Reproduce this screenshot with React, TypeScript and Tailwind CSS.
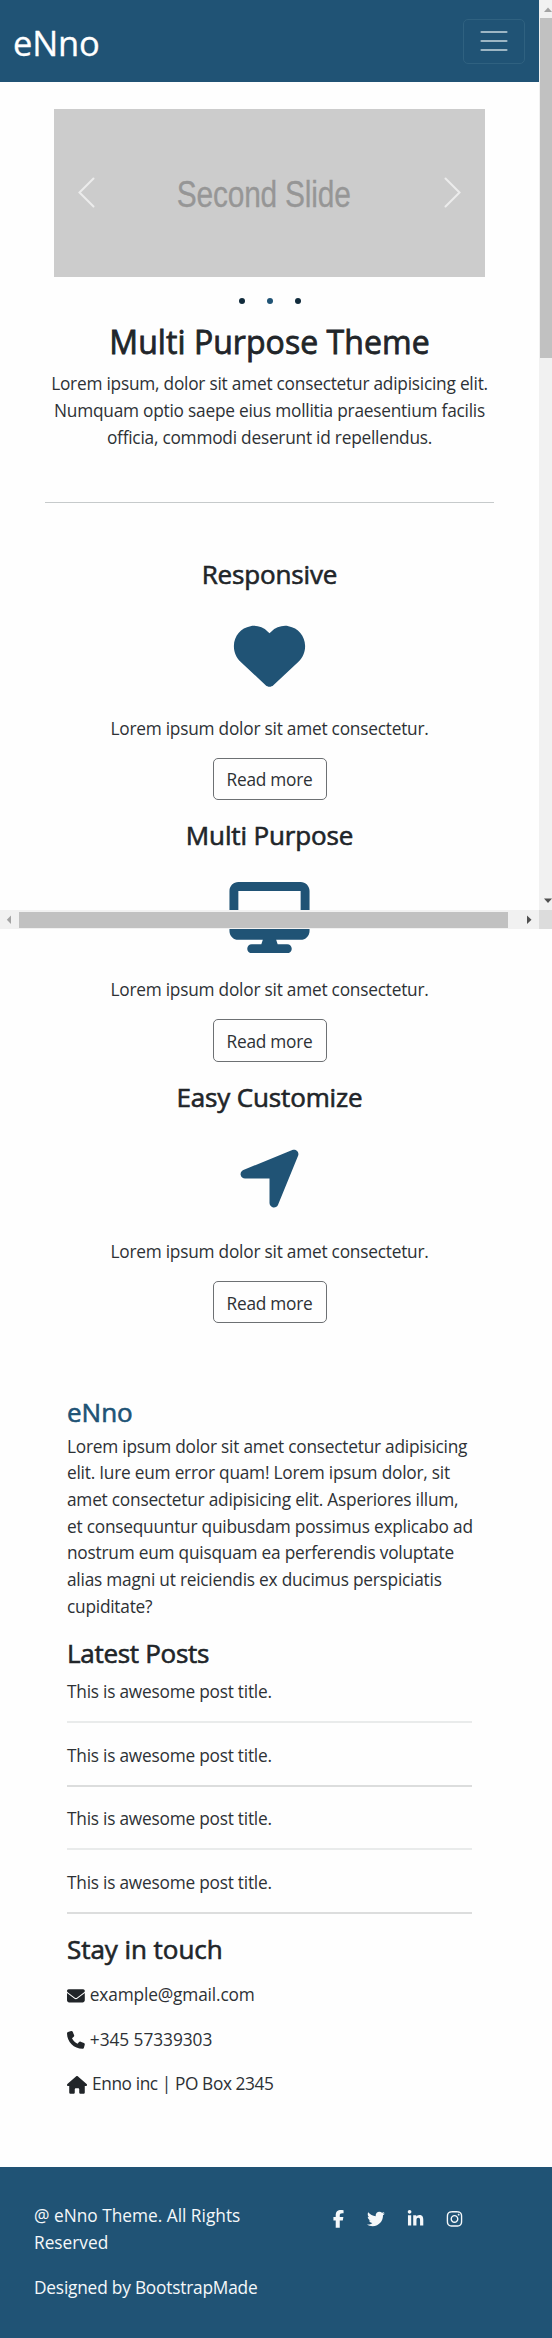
import type { ReactNode } from "react";
import type { IconType } from "react-icons";
import {
  FaDesktop,
  FaEnvelope,
  FaFacebookF,
  FaHeart,
  FaHouse,
  FaInstagram,
  FaLinkedinIn,
  FaLocationArrow,
  FaPhone,
  FaTwitter,
} from "react-icons/fa6";

const features: { title: string; icon: IconType }[] = [
  { title: "Responsive", icon: FaHeart },
  { title: "Multi Purpose", icon: FaDesktop },
  { title: "Easy Customize", icon: FaLocationArrow },
];

const posts = [
  { title: "This is awesome post title.", line: "bg-[#e9ebeb]" },
  { title: "This is awesome post title.", line: "bg-[#dcdddd]" },
  { title: "This is awesome post title.", line: "bg-[#e9ebeb]" },
  { title: "This is awesome post title.", line: "bg-[#dcdddd]" },
];

function SectionTitle({ children, className = "text-[#212529]" }: { children: ReactNode; className?: string }) {
  return (
    <h2
      className={`h-8 whitespace-nowrap text-[26px] leading-8 [-webkit-text-stroke:0.6px] ${className}`}
    >
      {children}
    </h2>
  );
}

function Header() {
  return (
    <header className="flex h-[82.3px] w-[539px] items-center justify-between bg-[#205375] pr-[14px] pl-[13px]">
      <span className="pt-[3px] text-[34.5px] leading-[48px] tracking-[-0.2px] text-white [-webkit-text-stroke:0.3px]">
        eNno
      </span>
      <button
        aria-label="Menu"
        className="flex h-[45px] w-[62px] items-center justify-center rounded-[5px] border border-[#2f6180]"
      >
        <svg width="28" height="24" viewBox="0 0 28 24" stroke="#9db6c4" strokeWidth="2.2" strokeLinecap="round">
          <path d="M1.5 3H26.5M1.5 12H26.5M1.5 21H26.5" />
        </svg>
      </button>
    </header>
  );
}

function Carousel() {
  return (
    <section className="flex flex-col items-center pt-[26.7px]">
      <div className="flex h-[168px] w-[431px] items-center justify-between bg-[#ccc] px-[24px]">
        <svg width="17" height="31" viewBox="0 0 17 31" fill="none" stroke="#ececec" strokeWidth="2" strokeLinecap="round">
          <path d="M15.5 1.5 1.5 15.5 15.5 29.5" />
        </svg>
        <div className="flex w-[174px] -translate-x-[6px] justify-center pt-[4px]">
          <span className="origin-center scale-x-[0.83] whitespace-nowrap font-['Liberation_Sans',sans-serif] text-[36px] leading-[40px] text-[#969696] [-webkit-text-stroke:0.3px]">
            Second Slide
          </span>
        </div>
        <svg width="17" height="31" viewBox="0 0 17 31" fill="none" stroke="#ececec" strokeWidth="2" strokeLinecap="round">
          <path d="M1.5 1.5 15.5 15.5 1.5 29.5" />
        </svg>
      </div>
      <div className="mt-[21px] flex h-[6px] gap-[22px]">
        <i className="size-[6px] rounded-full bg-[#112b3c]" />
        <i className="size-[6px] rounded-full bg-[#205375]" />
        <i className="size-[6px] rounded-full bg-[#112b3c]" />
      </div>
      <h1 className="mt-[19px] h-[38px] whitespace-nowrap text-[32px] leading-[38px] tracking-[0.05px] text-[#212529] [-webkit-text-stroke:0.8px]">
        Multi Purpose Theme
      </h1>
      <p className="mt-[10.2px] text-center whitespace-nowrap">
        Lorem ipsum, dolor sit amet consectetur adipisicing elit.
        <br />
        Numquam optio saepe eius mollitia praesentium facilis
        <br />
        officia, commodi deserunt id repellendus.
      </p>
    </section>
  );
}

function Features() {
  return (
    <section>
      {features.map(({ title, icon: Icon }) => (
        <article key={title} className="flex h-[261.6px] flex-col items-center">
          <SectionTitle className="tracking-[-0.15px] text-[#212529]">{title}</SectionTitle>
          <div className="flex h-[126px] items-center pt-[6.3px]">
            <Icon className="h-[71.2px] w-[81px] text-[#205375]" />
          </div>
          <p className="whitespace-nowrap">Lorem ipsum dolor sit amet consectetur.</p>
          <button className="mt-[15.3px] h-[42.5px] w-[114px] rounded-[5px] border border-[#6d7073] pt-[4px] tracking-[-0.25px]">
            Read more
          </button>
        </article>
      ))}
    </section>
  );
}

function About() {
  return (
    <section className="pl-[67px]">
      <SectionTitle className="tracking-[0px] text-[#205375]">eNno</SectionTitle>
      <p className="mt-[5.7px] whitespace-nowrap">
        Lorem ipsum dolor sit amet consectetur adipisicing
        <br />
        elit. Iure eum error quam! Lorem ipsum dolor, sit
        <br />
        amet consectetur adipisicing elit. Asperiores illum,
        <br />
        et consequuntur quibusdam possimus explicabo ad
        <br />
        nostrum eum quisquam ea perferendis voluptate
        <br />
        alias magni ut reiciendis ex ducimus perspiciatis
        <br />
        cupiditate?
      </p>
      <SectionTitle className="mt-[17px] mb-[10px] tracking-[-0.3px] text-[#212529]">Latest Posts</SectionTitle>
      {posts.map((post, i) => (
        <div key={i} className="h-[63.4px] w-[405px]">
          <p>{post.title}</p>
          <div className={`mt-[15.3px] h-[2px] ${post.line}`} />
        </div>
      ))}
      <SectionTitle className="tracking-[-0.05px] text-[#212529]">Stay in touch</SectionTitle>
      <ul className="mt-[17.3px] flex flex-col gap-[17.8px]">
        <li className="flex items-center gap-[5px] tracking-[-0.15px]">
          <FaEnvelope className="size-[17.8px] text-[#212529]" />
          example@gmail.com
        </li>
        <li className="flex items-center gap-[5px] tracking-[-0.05px]">
          <FaPhone className="size-[17.8px] text-[#212529]" />
          +345 57339303
        </li>
        <li className="flex items-center gap-[5px] tracking-[-0.4px]">
          <FaHouse className="h-[17.8px] w-[20px] text-[#212529]" />
          Enno inc | PO Box 2345
        </li>
      </ul>
    </section>
  );
}

function Footer() {
  return (
    <footer className="flex h-[170.7px] bg-[#205375] pt-[35px] pl-[34px] text-[#f5f8fa]">
      <div className="w-[298px] pt-px whitespace-nowrap">
        <p className="tracking-[0px]">
          @ eNno Theme. All Rights
          <br />
          Reserved
        </p>
        <p className="mt-[17.8px] tracking-[-0.2px]">Designed by BootstrapMade</p>
      </div>
      <div className="flex h-[34px] items-center gap-[22px]">
        <FaFacebookF className="h-[17.8px] w-[13px]" />
        <FaTwitter className="size-[17.8px]" />
        <FaLinkedinIn className="h-[17.8px] w-[17px]" />
        <FaInstagram className="h-[17.8px] w-[17px]" />
      </div>
    </footer>
  );
}

function Scrollbars() {
  return (
    <>
      <div className="absolute top-0 right-0 flex h-[910px] w-[13px] flex-col items-end bg-[#f1f1f1]">
        <svg className="h-[18px] w-[13px]" viewBox="0 0 13 18">
          <path d="M5 12 9 7.5 13 12Z" fill="#a3a3a3" />
        </svg>
        <div className="h-[340px] w-[12px] bg-[#c1c1c1]" />
        <svg className="mt-auto h-[18px] w-[13px]" viewBox="0 0 13 18">
          <path d="M5 6.5 9 11 13 6.5Z" fill="#505050" />
        </svg>
      </div>
      <div className="absolute top-[910px] left-0 flex h-[19px] w-[552px] items-center bg-[#f1f1f1]">
        <svg className="h-[19px] w-[19px]" viewBox="0 0 19 19">
          <path d="M11 5.5V14L6.8 9.7Z" fill="#a3a3a3" />
        </svg>
        <div className="h-[16px] w-[489px] bg-[#c1c1c1]" />
        <svg className="h-[19px] w-[31px]" viewBox="0 0 31 19">
          <path d="M19 5.5V14L23.5 9.7Z" fill="#505050" />
        </svg>
        <div className="h-full w-[13px] bg-[#dcdcdc]" />
      </div>
    </>
  );
}

export default function App() {
  return (
    <div className="relative h-[2338px] w-[552px] overflow-hidden bg-[#fefefe] font-['Open_Sans','Noto_Sans',sans-serif] text-[17.3px] leading-[26.7px] tracking-[-0.23px] text-[#2d3135]">
      <Header />
      <main className="h-[2085px] w-[539px]">
        <Carousel />
        <div className="mt-[50.3px] mb-[55px] ml-[45px] h-px w-[449px] bg-[#c6cacb]" />
        <Features />
        <div className="h-[53.5px]" />
        <About />
      </main>
      <Footer />
      <Scrollbars />
    </div>
  );
}
